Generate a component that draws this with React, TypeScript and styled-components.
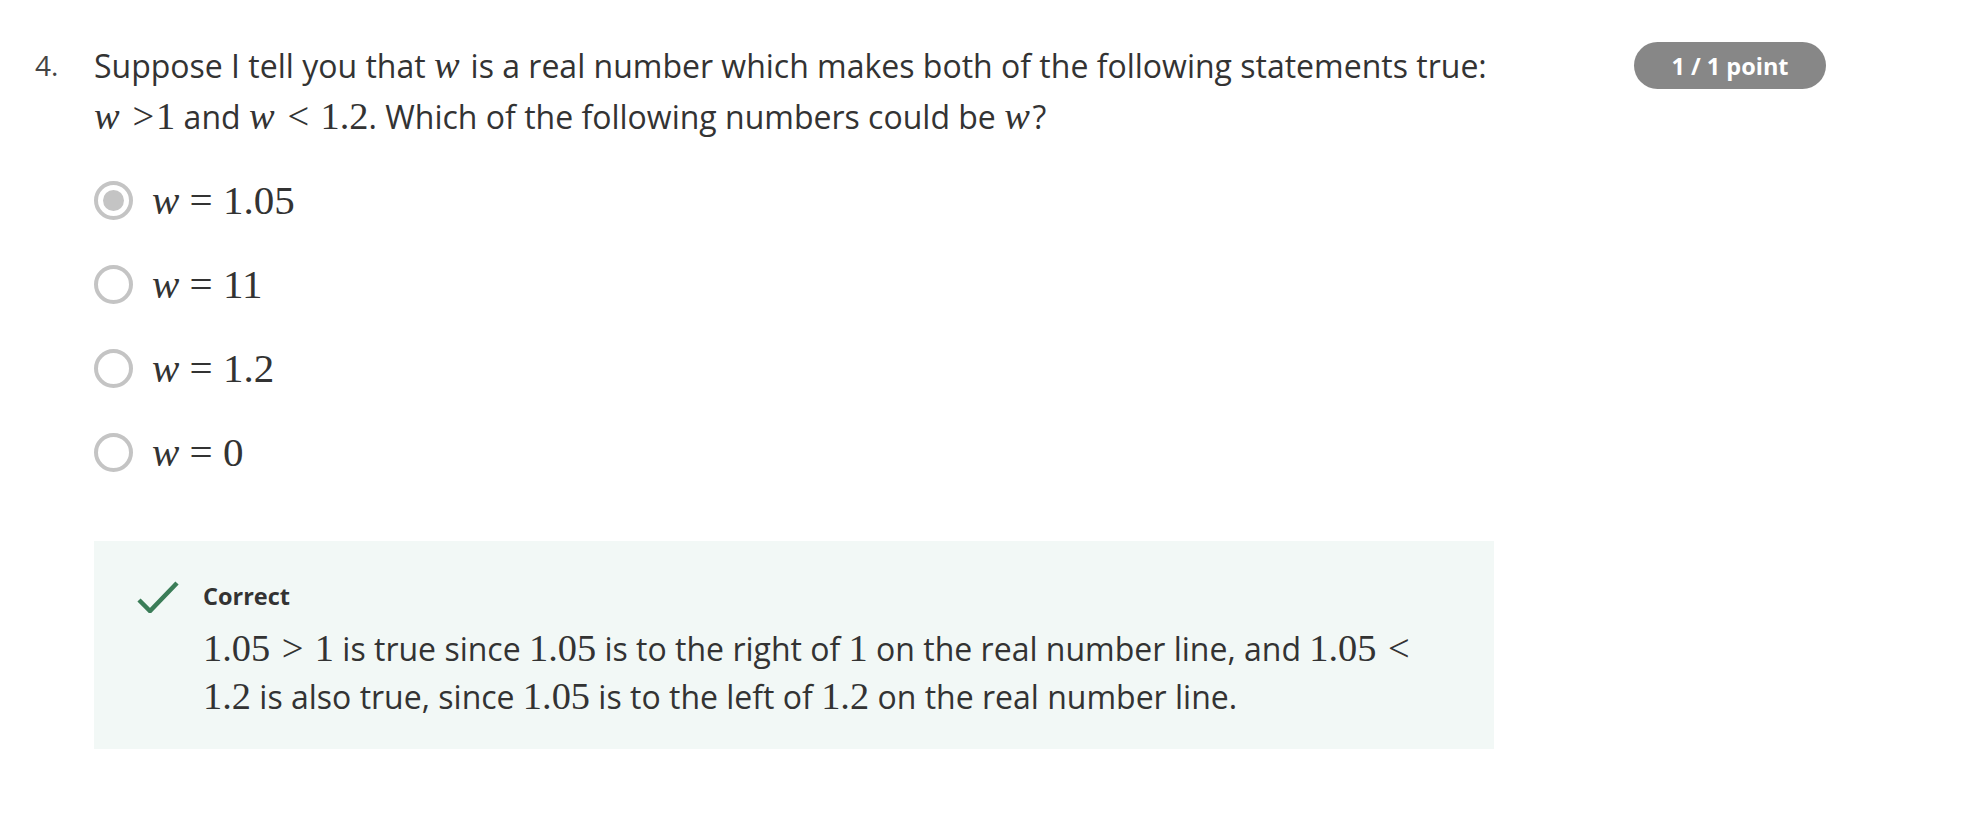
import React from "react";
import styled, { createGlobalStyle } from "styled-components";

const Global = createGlobalStyle`
  html, body { margin: 0; padding: 0; background: #ffffff; }
  body { font-family: "Open Sans", "Noto Sans", sans-serif; color: #333333; }
`;

const Page = styled.div`
  display: flex;
  align-items: flex-start;
  padding: 40px 0 0 35px;
`;

const Number = styled.div`
  width: 59px;
  font-size: 28px;
  line-height: 51px;
  color: #444444;
`;

const Content = styled.div`
  width: 1400px;
  display: flex;
  flex-direction: column;
`;

const Question = styled.div`
  font-size: 32px;
  line-height: 51px;
  color: #333333;
`;

const M = styled.span<{ $it?: boolean }>`
  font-family: "Liberation Serif", "Times New Roman", serif;
  font-size: 1.2em;
  font-style: ${(p) => (p.$it ? "italic" : "normal")};
  padding-right: ${(p) => (p.$it ? "0.07em" : "0")};
  line-height: 1;
`;

const Rel = styled.span`
  padding: 0 0.05em;
`;

const NoWrap = styled.span`
  white-space: nowrap;
`;

const Options = styled.div`
  display: flex;
  flex-direction: column;
  margin-top: 16px;
`;

const OptionRow = styled.label`
  display: flex;
  align-items: center;
  height: 84px;
  gap: 19px;
`;

const Radio = styled.span<{ $checked?: boolean }>`
  box-sizing: border-box;
  width: 39px;
  height: 39px;
  border-radius: 50%;
  border: 4px solid #c4c4c4;
  display: flex;
  align-items: center;
  justify-content: center;
  &::after {
    content: "";
    width: 21px;
    height: 21px;
    border-radius: 50%;
    background: #c4c4c4;
    display: ${(p) => (p.$checked ? "block" : "none")};
  }
`;

const OptionText = styled.span`
  font-family: "Liberation Serif", "Times New Roman", serif;
  font-size: 41px;
  color: #333333;
`;

const Feedback = styled.div`
  margin-top: 47px;
  background: #f2f8f6;
  padding: 40px 43px 28px 43px;
  display: flex;
`;

const IconCol = styled.div`
  width: 66px;
  flex: none;
`;

const FeedbackBody = styled.div`
  display: flex;
  flex-direction: column;
  flex: 1;
`;

const FeedbackTitle = styled.div`
  font-size: 23.5px;
  font-weight: 700;
  line-height: 30px;
  color: #333333;
  margin-bottom: 14px;
`;

const FeedbackText = styled.div`
  font-size: 32px;
  line-height: 48px;
  color: #333333;
`;

const Badge = styled.div`
  margin-left: 140px;
  margin-top: 2px;
  width: 192px;
  height: 47px;
  border-radius: 24px;
  background: #878787;
  color: #ffffff;
  font-size: 23.5px;
  font-weight: 700;
  display: flex;
  align-items: center;
  justify-content: center;
`;

const Check = () => (
  <svg width="42" height="32" viewBox="0 0 42 32" fill="none">
    <path d="M2 19 L13 30 L40 2" stroke="#3b7d58" strokeWidth="4.5" />
  </svg>
);

const options = [
  { v: "1.05", checked: true },
  { v: "11" },
  { v: "1.2" },
  { v: "0" },
];

export default function App() {
  return (
    <>
      <Global />
      <Page>
        <Number>4.</Number>
        <Content>
          <Question>
            Suppose I tell you that <M $it>w</M> is a real number which makes both of the following statements true:{" "}
            <NoWrap>
              <M $it>w</M> <M><Rel>&gt;</Rel></M><M>1</M>
            </NoWrap>{" "}
            and <M $it>w</M> <M><Rel>&lt;</Rel> 1.2</M>. Which of the following numbers could be <M $it>w</M>?
          </Question>
          <Options>
            {options.map((o) => (
              <OptionRow key={o.v}>
                <Radio $checked={o.checked} />
                <OptionText>
                  <i>w</i> = {o.v}
                </OptionText>
              </OptionRow>
            ))}
          </Options>
          <Feedback>
            <IconCol>
              <Check />
            </IconCol>
            <FeedbackBody>
              <FeedbackTitle>Correct</FeedbackTitle>
              <FeedbackText>
                <M>1.05 <Rel>&gt;</Rel> 1</M> is true since <M>1.05</M> is to the right of <M>1</M> on the real number line, and <M>1.05 <Rel>&lt;</Rel></M> <M>1.2</M> is also true, since <M>1.05</M> is to the left of <M>1.2</M> on the real number line.
              </FeedbackText>
            </FeedbackBody>
          </Feedback>
        </Content>
        <Badge>1 / 1 point</Badge>
      </Page>
    </>
  );
}
